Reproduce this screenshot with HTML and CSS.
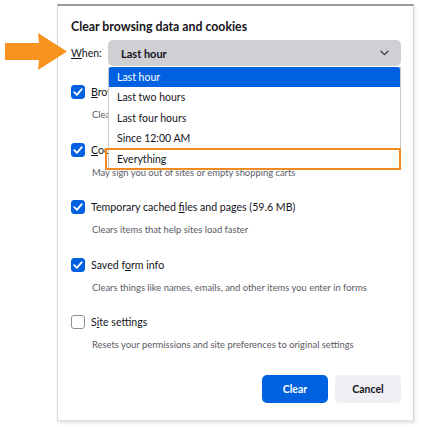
FILE: index.html
```html
<!DOCTYPE html>
<html lang="en">
<head>
<meta charset="utf-8">
<title>Clear browsing data and cookies</title>
<link rel="stylesheet" href="styles.css">
</head>
<body>
<div class="stage">
  <div class="dialog">
    <h1 class="title">Clear browsing data and cookies</h1>
    <div class="when-row">
      <span class="when-label"><u>W</u>hen:</span>
      <div class="select">
        <span class="select-value">Last hour</span>
        <svg class="chevron" width="9" height="6" viewBox="0 0 9 6"><path d="M1 1.2 L4.5 4.6 L8 1.2" fill="none" stroke="#3a3a44" stroke-width="1.3" stroke-linecap="round" stroke-linejoin="round"/></svg>
      </div>
    </div>

    <div class="options">
      <div class="opt">
        <div class="opt-row"><span class="cb on"><svg viewBox="0 0 14 14" width="14" height="14"><path d="M3.2 7.2 L5.9 9.8 L10.8 4.2" fill="none" stroke="#fff" stroke-width="1.8" stroke-linecap="round" stroke-linejoin="round"/></svg></span><span class="opt-label"><u>B</u>rowsing history</span></div>
        <div class="opt-desc">Clears site and download history</div>
      </div>
      <div class="opt">
        <div class="opt-row"><span class="cb on"><svg viewBox="0 0 14 14" width="14" height="14"><path d="M3.2 7.2 L5.9 9.8 L10.8 4.2" fill="none" stroke="#fff" stroke-width="1.8" stroke-linecap="round" stroke-linejoin="round"/></svg></span><span class="opt-label"><u>C</u>ookies and site data</span></div>
        <div class="opt-desc">May sign you out of sites or empty shopping carts</div>
      </div>
      <div class="opt">
        <div class="opt-row"><span class="cb on"><svg viewBox="0 0 14 14" width="14" height="14"><path d="M3.2 7.2 L5.9 9.8 L10.8 4.2" fill="none" stroke="#fff" stroke-width="1.8" stroke-linecap="round" stroke-linejoin="round"/></svg></span><span class="opt-label">Temporary cached <u>f</u>iles and pages (59.6 MB)</span></div>
        <div class="opt-desc">Clears items that help sites load faster</div>
      </div>
      <div class="opt">
        <div class="opt-row"><span class="cb on"><svg viewBox="0 0 14 14" width="14" height="14"><path d="M3.2 7.2 L5.9 9.8 L10.8 4.2" fill="none" stroke="#fff" stroke-width="1.8" stroke-linecap="round" stroke-linejoin="round"/></svg></span><span class="opt-label">Saved f<u>o</u>rm info</span></div>
        <div class="opt-desc">Clears things like names, emails, and other items you enter in forms</div>
      </div>
      <div class="opt">
        <div class="opt-row"><span class="cb"></span><span class="opt-label">S<u>i</u>te settings</span></div>
        <div class="opt-desc">Resets your permissions and site preferences to original settings</div>
      </div>
    </div>

    <div class="buttons">
      <button class="btn primary">Clear</button>
      <button class="btn">Cancel</button>
    </div>

    <ul class="menu">
      <li class="menu-item active">Last hour</li>
      <li class="menu-item">Last two hours</li>
      <li class="menu-item">Last four hours</li>
      <li class="menu-item">Since 12:00 AM</li>
      <li class="menu-item">Everything</li>
    </ul>
    <div class="highlight"></div>
  </div>

  <svg class="arrow" width="64" height="40" viewBox="0 0 64 40"><path d="M0 10 L34 10 L33 0 L62 18.5 L33 37 L34 27 L0 27 Z" fill="#f7931e"/></svg>
</div>
</body>
</html>
```

FILE: styles.css
```css
* { box-sizing: border-box; }
html, body {
  margin: 0;
  padding: 0;
  background: #ffffff;
}
body {
  font-family: Lato, "Liberation Sans", sans-serif;
  color: #15141a;
}
.stage {
  position: relative;
  width: 421px;
  height: 427px;
  padding: 4px 0 0 57px;
}
.dialog {
  position: relative;
  z-index: 1;
  width: 357px;
  height: 417px;
  background: #fff;
  border-top: 2px solid #9a9a9a;
  border-left: 1px solid #d6d6d6;
  border-right: 1px solid #d6d6da;
  border-bottom: 1px solid #e2e2e8;
  box-shadow: 1px 2px 3px rgba(0,0,0,0.12);
  padding: 11px 12px 0 13px;
  display: flex;
  flex-direction: column;
}
.title {
  margin: 0;
  font-size: 12.3px;
  font-weight: 700;
  line-height: 20px;
}
.when-row {
  display: flex;
  align-items: center;
  margin-top: 3px;
  height: 26px;
}
.when-label {
  width: 37px;
  font-size: 10.5px;
}
.select {
  flex: 1;
  height: 26px;
  background: #cfcfd4;
  border-radius: 5px;
  display: flex;
  align-items: center;
  justify-content: space-between;
  padding: 0 12px 0 13px;
}
.select-value {
  font-size: 11px;
  font-weight: 700;
}
.chevron { display: block; }
.options {
  margin-top: 16px;
  display: flex;
  flex-direction: column;
  gap: 14.5px;
}
.opt-row {
  display: flex;
  align-items: center;
  height: 20px;
  gap: 6px;
}
.cb {
  width: 14px;
  height: 14px;
  border-radius: 3px;
  border: 1px solid #8f8f9d;
  background: #fff;
  display: flex;
  align-items: center;
  justify-content: center;
  flex: none;
}
.cb.on {
  background: #0061e0;
  border-color: #0061e0;
}
.cb svg { display: block; flex: none; }
.opt-label {
  font-size: 10.6px;
  line-height: 20px;
  white-space: nowrap;
}
.opt-desc {
  margin-top: 3px;
  padding-left: 21px;
  font-size: 9.4px;
  line-height: 20px;
  color: #5b5b66;
  white-space: nowrap;
}
.buttons {
  margin-top: 20px;
  display: flex;
  justify-content: flex-end;
  gap: 7px;
}
.btn {
  width: 66px;
  height: 28px;
  border: none;
  border-radius: 5px;
  background: #f0f0f4;
  color: #15141a;
  font-family: inherit;
  font-size: 10.5px;
  font-weight: 700;
}
.btn.primary {
  background: #0061e0;
  color: #fff;
}
.menu {
  position: absolute;
  z-index: 2;
  left: 50px;
  top: 61px;
  width: 293px;
  margin: 0;
  padding: 0;
  list-style: none;
  background: #fff;
  border: 1px solid #c8c8cc;
  border-top: none;
}
.menu-item {
  height: 20.4px;
  line-height: 19.4px;
  padding: 1px 0 0 8px;
  font-size: 10.5px;
}
.menu-item.active {
  background: #0061e0;
  color: #fff;
  border-radius: 2px 2px 0 0;
}
.highlight {
  position: absolute;
  z-index: 3;
  left: 47px;
  top: 142px;
  width: 296px;
  height: 22px;
  border: 2px solid #f38b22;
}
.arrow {
  position: absolute;
  z-index: 5;
  left: 5px;
  top: 33px;
  width: 64px;
  height: 40px;
  overflow: visible;
}
```
